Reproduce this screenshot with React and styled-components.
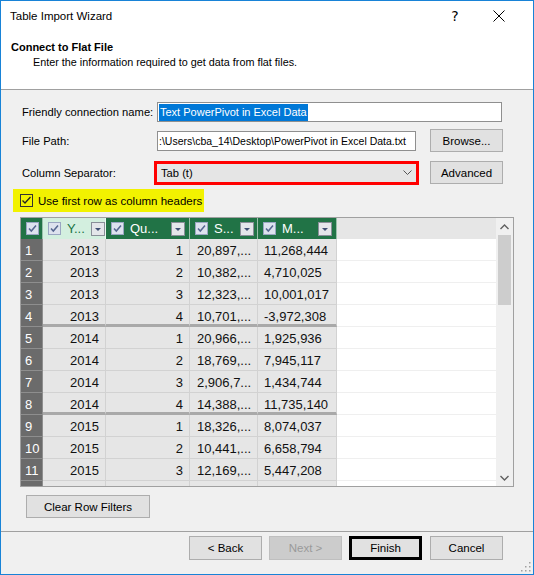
import React from 'react';
import styled, { createGlobalStyle } from 'styled-components';

const GlobalStyle = createGlobalStyle`
  html, body { margin: 0; padding: 0; background: #ffffff; }
  body { font-family: "Liberation Sans", Arial, sans-serif; }
  * { box-sizing: border-box; }
`;

const Window = styled.div`
  position: relative;
  width: 534px;
  height: 575px;
  border: 1px solid #1883d7;
  background: #f0f0f0;
  display: flex;
  flex-direction: column;
  overflow: hidden;
  font-family: "Liberation Sans", Arial, sans-serif;
  font-size: 11px;
  color: #000;
`;

const TopArea = styled.div`
  height: 89px;
  background: #ffffff;
  border-bottom: 1px solid #a0a0a0;
  flex: none;
`;

const TitleBar = styled.div`
  height: 30px;
  display: flex;
  align-items: center;
  padding-left: 9px;
  padding-right: 12px;
`;

const TitleText = styled.div`
  flex: 1;
  font-size: 11.5px;
`;

const TitleControl = styled.div`
  width: 44px;
  height: 30px;
  display: flex;
  align-items: center;
  justify-content: center;
  font-size: 14px;
  font-family: "DejaVu Sans", sans-serif;
`;

const Heading = styled.div`
  padding: 9px 0 0 10px;
  font-weight: bold;
  font-size: 11px;
  line-height: 14px;
`;

const SubHeading = styled.div`
  padding-left: 32px;
  font-size: 10.8px;
  line-height: 16px;
`;

const Body = styled.div`
  flex: 1;
  display: flex;
  flex-direction: column;
`;

const FormRow = styled.div`
  display: flex;
  align-items: center;
  height: ${p => p.$h}px;
  margin-top: ${p => p.$mt}px;
  padding-left: 21px;
`;

const Label = styled.div`
  width: 135px;
  flex: none;
  font-size: 11.2px;
`;

const TextBox = styled.div`
  width: ${p => p.$w}px;
  height: 20px;
  background: #fff;
  border: 1px solid #8f8f8f;
  display: flex;
  align-items: center;
  padding-left: 1px;
  white-space: nowrap;
  overflow: hidden;
  flex: none;
  font-size: ${p => p.$fs || 11}px;
`;

const Selected = styled.span`
  background: #0078d7;
  color: #fff;
  line-height: 17px;
  padding: 0 1px;
`;

const Button = styled.div`
  width: ${p => p.$w || 73}px;
  height: ${p => p.$h || 23}px;
  margin-left: ${p => p.$ml || 0}px;
  flex: none;
  display: flex;
  align-items: center;
  justify-content: center;
  background: ${p => (p.$disabled ? '#cccccc' : '#e1e1e1')};
  border: ${p => (p.$focus ? '3px solid #000' : p.$disabled ? '1px solid #bfbfbf' : '1px solid #adadad')};
  color: ${p => (p.$disabled ? '#9a9a9a' : '#000')};
  font-size: 11.5px;
`;

const Combo = styled.div`
  width: 259px;
  height: 18px;
  flex: none;
  background: #e5e5e5;
  outline: 3px solid #ff0000;
  display: flex;
  align-items: center;
  justify-content: space-between;
  padding: 0 4px 0 4px;
  font-size: 11.2px;
`;

const CheckRow = styled.div`
  margin: 5px 0 0 12px;
  width: 191px;
  height: 23px;
  background: #f2f200;
  display: flex;
  align-items: center;
  gap: 5px;
  padding-left: 7px;
  font-size: 11.5px;
`;

const GridBox = styled.div`
  margin: 5px 0 0 19px;
  width: 494px;
  height: 270px;
  border: 1px solid #a0a0a0;
  display: flex;
  flex: none;
  background: #fff;
`;

const TableArea = styled.div`
  flex: 1;
  overflow: hidden;
  display: flex;
  flex-direction: column;
`;

const cols = '22px 63px 84px 68px 79px 1fr';

const HeaderRow = styled.div`
  display: grid;
  grid-template-columns: ${cols};
  height: 21px;
  flex: none;
`;

const HeadCell = styled.div`
  display: flex;
  align-items: center;
  gap: 6px;
  padding: 0 4px 0 5px;
  background: ${p => (p.$sel ? '#d3efdf' : '#217346')};
  color: ${p => (p.$sel ? '#217346' : '#ffffff')};
  border-right: 1px solid rgba(255, 255, 255, 0.55);
  font-size: 13px;
  justify-content: ${p => (p.$center ? 'center' : 'flex-start')};
  white-space: nowrap;
  overflow: hidden;
`;

const HeadText = styled.span`
  flex: 1;
`;

const HeadEmpty = styled.div`
  background: #e6e6e6;
`;

const DataRow = styled.div`
  display: grid;
  grid-template-columns: ${cols};
  height: 22px;
  flex: none;
`;

const RowNum = styled.div`
  background: #6b6b6b;
  color: #fff;
  font-size: 13px;
  display: flex;
  align-items: center;
  padding: 2px 0 0 4px;
  border-bottom: 1px solid #8e8e8e;
  border-right: 1px solid #8e8e8e;
`;

const Cell = styled.div`
  background: #e6e6e6;
  border-right: 1px solid #d2d2d2;
  border-bottom: ${p => (p.$group ? '3px solid #a9a9a9' : '1px solid #d2d2d2')};
  display: flex;
  align-items: center;
  justify-content: ${p => (p.$right ? 'flex-end' : 'flex-start')};
  padding: ${p => (p.$group ? '4px' : '2px')} ${p => (p.$right ? '6px' : '0')} 0 ${p => (p.$right ? '0' : p.$pl || 6)}px;
  font-size: 13px;
  color: #111;
  white-space: nowrap;
  overflow: hidden;
`;

const EmptyCell = styled.div`
  background: #fff;
  border-bottom: 1px solid #efefef;
`;

const ScrollBar = styled.div`
  width: 17px;
  flex: none;
  background: #f0f0f0;
  display: flex;
  flex-direction: column;
  align-items: center;
`;

const ScrollArrow = styled.div`
  width: 17px;
  height: 17px;
  display: flex;
  align-items: center;
  justify-content: center;
  flex: none;
`;

const Thumb = styled.div`
  width: 13px;
  height: 70px;
  background: #cdcdcd;
  flex: none;
`;

const ScrollSpace = styled.div`
  flex: 1;
`;

const Separator = styled.div`
  margin-top: 13px;
  height: 1px;
  background: #a0a0a0;
  flex: none;
`;

const ButtonBar = styled.div`
  margin-top: 4px;
  display: flex;
  justify-content: flex-end;
  gap: 7px;
  padding-right: 30px;
`;

const Grip = styled.div`
  position: absolute;
  right: 2px;
  bottom: 2px;
  width: 11px;
  height: 11px;
`;

const HeaderCheck = () => (
  <svg width="13" height="13" viewBox="0 0 13 13" style={{ flex: 'none' }}>
    <rect x="0.5" y="0.5" width="12" height="12" fill="#dde2ee" stroke="#9aa6c2" />
    <path d="M3 6.5 L5.3 9 L10 3.5" fill="none" stroke="#55668f" strokeWidth="1.5" />
  </svg>
);

const FilterButton = () => (
  <svg width="14" height="14" viewBox="0 0 14 14" style={{ flex: 'none' }}>
    <rect x="0.5" y="0.5" width="13" height="13" fill="#e4e6ea" stroke="#8a8f99" />
    <path d="M4 6 L10 6 L7 9 Z" fill="#3f4f73" />
  </svg>
);

const rows = [
  ['2013', '1', '20,897,...', '11,268,444'],
  ['2013', '2', '10,382,...', '4,710,025'],
  ['2013', '3', '12,323,...', '10,001,017'],
  ['2013', '4', '10,701,...', '-3,972,308'],
  ['2014', '1', '20,966,...', '1,925,936'],
  ['2014', '2', '18,769,...', '7,945,117'],
  ['2014', '3', '2,906,7...', '1,434,744'],
  ['2014', '4', '14,388,...', '11,735,140'],
  ['2015', '1', '18,326,...', '8,074,037'],
  ['2015', '2', '10,441,...', '6,658,794'],
  ['2015', '3', '12,169,...', '5,447,208'],
  ['', '', '', ''],
];

export default function App() {
  return (
    <>
      <GlobalStyle />
      <Window>
        <TopArea>
          <TitleBar>
            <TitleText>Table Import Wizard</TitleText>
            <TitleControl>?</TitleControl>
            <TitleControl>
              <svg width="12" height="12" viewBox="0 0 12 12">
                <path d="M0.5 0.5 L11.5 11.5 M11.5 0.5 L0.5 11.5" stroke="#000" strokeWidth="1" />
              </svg>
            </TitleControl>
          </TitleBar>
          <Heading>Connect to Flat File</Heading>
          <SubHeading>Enter the information required to get data from flat files.</SubHeading>
        </TopArea>
        <Body>
          <FormRow $h={20} $mt={12}>
            <Label>Friendly connection name:</Label>
            <TextBox $w={345}>
              <Selected>Text PowerPivot in Excel Data</Selected>
            </TextBox>
          </FormRow>
          <FormRow $h={23} $mt={7}>
            <Label>File Path:</Label>
            <TextBox $w={259} $fs={10.5}>:\Users\cba_14\Desktop\PowerPivot in Excel Data.txt</TextBox>
            <Button $ml={14}>Browse...</Button>
          </FormRow>
          <FormRow $h={23} $mt={9}>
            <Label>Column Separator:</Label>
            <Combo>
              <span>Tab (t)</span>
              <svg width="9" height="6" viewBox="0 0 9 6">
                <path d="M0.5 0.5 L4.5 4.5 L8.5 0.5" fill="none" stroke="#555" strokeWidth="1" />
              </svg>
            </Combo>
            <Button $ml={14}>Advanced</Button>
          </FormRow>
          <CheckRow>
            <svg width="13" height="13" viewBox="0 0 13 13">
              <rect x="0.5" y="0.5" width="12" height="12" fill="none" stroke="#333" />
              <path d="M2.5 6.5 L5 9 L10.5 3" fill="none" stroke="#222" strokeWidth="1.3" />
            </svg>
            <span>Use first row as column headers</span>
          </CheckRow>
          <GridBox>
            <TableArea>
              <HeaderRow>
                <HeadCell $center>
                  <HeaderCheck />
                </HeadCell>
                <HeadCell $sel>
                  <HeaderCheck />
                  <HeadText>Y...</HeadText>
                  <FilterButton />
                </HeadCell>
                <HeadCell>
                  <HeaderCheck />
                  <HeadText>Qu...</HeadText>
                  <FilterButton />
                </HeadCell>
                <HeadCell>
                  <HeaderCheck />
                  <HeadText>S...</HeadText>
                  <FilterButton />
                </HeadCell>
                <HeadCell>
                  <HeaderCheck />
                  <HeadText>M...</HeadText>
                  <FilterButton />
                </HeadCell>
                <HeadEmpty />
              </HeaderRow>
              {rows.map((r, i) => {
                const group = i === 3 || i === 7;
                return (
                  <DataRow key={i}>
                    <RowNum>{i < 11 ? i + 1 : ''}</RowNum>
                    <Cell $right $group={group}>{r[0]}</Cell>
                    <Cell $right $group={group}>{r[1]}</Cell>
                    <Cell $group={group} $pl={7}>{r[2]}</Cell>
                    <Cell $group={group}>{r[3]}</Cell>
                    <EmptyCell />
                  </DataRow>
                );
              })}
            </TableArea>
            <ScrollBar>
              <ScrollArrow>
                <svg width="9" height="6" viewBox="0 0 9 6">
                  <path d="M0.5 5 L4.5 1 L8.5 5" fill="none" stroke="#606060" strokeWidth="1.4" />
                </svg>
              </ScrollArrow>
              <Thumb />
              <ScrollSpace />
              <ScrollArrow>
                <svg width="9" height="6" viewBox="0 0 9 6">
                  <path d="M0.5 1 L4.5 5 L8.5 1" fill="none" stroke="#606060" strokeWidth="1.4" />
                </svg>
              </ScrollArrow>
            </ScrollBar>
          </GridBox>
          <FormRow $h={23} $mt={8}>
            <Button $w={124} $ml={4}>Clear Row Filters</Button>
          </FormRow>
          <Separator />
          <ButtonBar>
            <Button $h={24}>&lt; Back</Button>
            <Button $h={24} $disabled>Next &gt;</Button>
            <Button $h={24} $focus>Finish</Button>
            <Button $h={24} style={{ marginLeft: 1 }}>Cancel</Button>
          </ButtonBar>
        </Body>
        <Grip>
          <svg width="11" height="11" viewBox="0 0 11 11">
            {[[9, 1], [9, 5], [9, 9], [5, 5], [5, 9], [1, 9]].map(([x, y], k) => (
              <rect key={k} x={x} y={y} width="1.5" height="1.5" fill="#a0a0a0" />
            ))}
          </svg>
        </Grip>
      </Window>
    </>
  );
}
